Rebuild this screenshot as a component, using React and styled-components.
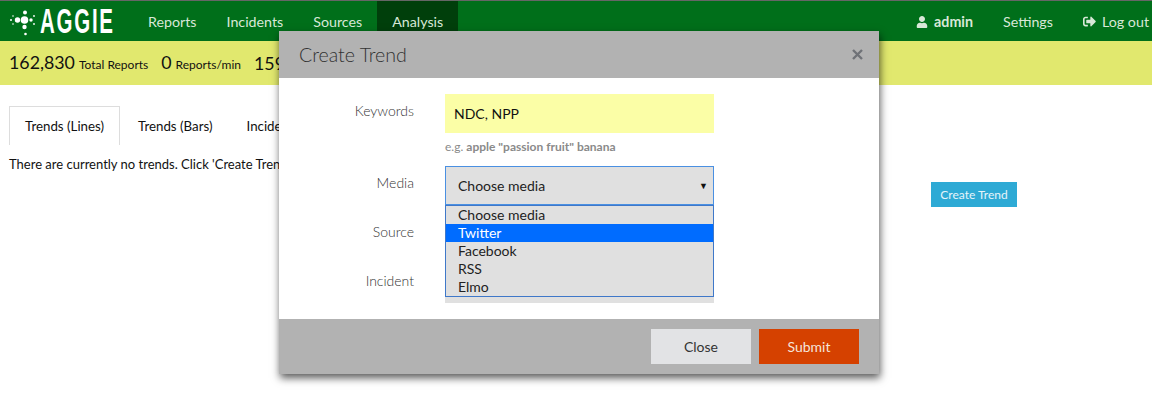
import React from "react"
import styled, { createGlobalStyle } from "styled-components"
import { FaUser, FaSignOutAlt } from "react-icons/fa"

const GlobalStyle = createGlobalStyle`
  html, body {
    margin: 0;
    padding: 0;
    background: #fff;
    color: #111;
    font-family: Lato, "Open Sans", sans-serif;
    font-size: 14px;
    line-height: 20px;
  }
`

const Page = styled.div`
  position: relative;
  width: 1152px;
  height: 409px;
  overflow: hidden;
`

const Navbar = styled.header`
  display: flex;
  align-items: stretch;
  height: 40px;
  background: #006f1a;
  border-top: 1px solid #666;
`

const Brand = styled.div`
  display: flex;
  flex-shrink: 0;
  align-items: center;
  width: 133px;
  padding-left: 8px;
  box-sizing: border-box;
`

const BrandName = styled.span`
  display: block;
  width: 74px;
  font-family: "Liberation Sans", sans-serif;
  font-weight: 700;
  font-size: 35px;
  line-height: 40px;
  letter-spacing: 3px;
  color: #fff;
  white-space: nowrap;
  transform: scaleX(0.585);
  transform-origin: left center;
`

const NavList = styled.nav`
  display: flex;
  flex: 1;
`

const NavItem = styled.a`
  display: flex;
  align-items: center;
  gap: 6px;
  padding: 1px 15px 0;
  font-size: 14.25px;
  color: #d8e8d8;
  font-weight: ${(props) => (props.$bold ? 700 : 400)};
  background: ${(props) => (props.$active ? "#003f0b" : "transparent")};
`

const NavRight = styled.nav`
  display: flex;
  margin-right: -12px;
`

const StatsBar = styled.div`
  display: flex;
  align-items: center;
  gap: 13px;
  height: 44px;
  padding: 0 9px;
  background: #e1e86e;
`

const Stat = styled.div`
  display: flex;
  align-items: baseline;
  gap: 4px;
  font-size: 12px;
  white-space: nowrap;
`

const StatValue = styled.span`
  font-size: 17.8px;
`

const Content = styled.div`
  display: flex;
`

const Main = styled.main`
  flex: 1;
  min-width: 0;
  padding: 21px 0 0 9px;
`

const Tabs = styled.ul`
  display: flex;
  gap: 2px;
  list-style: none;
  margin: 0 0 9px;
  padding: 0;
`

const Tab = styled.li`
  height: 20px;
  padding: 9px 15px;
  border: 1px solid ${(props) => (props.$active ? "#ddd" : "transparent")};
  border-bottom: 0;
  font-size: 13.3px;
  white-space: nowrap;
`

const Message = styled.p`
  margin: 0;
  font-size: 13px;
  white-space: nowrap;
`

const Aside = styled.aside`
  flex-shrink: 0;
  width: 221px;
  padding-top: 97px;
`

const CreateButton = styled.button`
  width: 86px;
  height: 25px;
  padding: 0;
  border: 0;
  background: #2eaad5;
  color: #e6f4fa;
  font: 400 12px Lato, sans-serif;
`

const Modal = styled.section`
  position: absolute;
  top: 31px;
  left: 279px;
  width: 600px;
  background: #fff;
  box-shadow: 1px 4px 8px rgba(0, 0, 0, 0.65);
`

const ModalHeader = styled.div`
  display: flex;
  align-items: center;
  justify-content: space-between;
  height: 47px;
  padding: 0 16px 0 20px;
  background: #b2b2b2;
`

const ModalTitle = styled.h4`
  margin: 0;
  font-size: 19.6px;
  font-weight: 300;
  color: #333;
`

const CloseIcon = styled.svg`
  width: 11px;
  height: 11px;
  stroke: #6f7277;
  stroke-width: 2.4;
`

const ModalBody = styled.div`
  display: grid;
  grid-template-columns: 135px 269px;
  column-gap: 31px;
  row-gap: 10px;
  padding: 16px 0;
`

const Label = styled.label`
  padding-top: 7px;
  text-align: right;
  font-weight: 300;
  color: #333;
`

const Field = styled.div`
  position: relative;
`

const KeywordInput = styled.div`
  box-sizing: border-box;
  height: 39px;
  padding: 10px 9px 9px;
  background: #fbfea6;
  color: #111;
`

const Hint = styled.div`
  margin-top: 4px;
  height: 19px;
  font-size: 12px;
  color: #8a8a8a;

  b {
    font-weight: 700;
  }
`

const Select = styled.div`
  display: flex;
  align-items: center;
  justify-content: space-between;
  box-sizing: border-box;
  height: 39px;
  padding: 0 5px 0 12px;
  background: #e0e0e0;
  border: 1px solid ${(props) => (props.$open ? "#4a90e2" : "#e0e0e0")};
  color: #222;
`

const Caret = styled.span`
  font-size: 9px;
  color: #111;
`

const Dropdown = styled.ul`
  position: absolute;
  top: 100%;
  left: 0;
  right: 0;
  z-index: 2;
  margin: 0;
  padding: 0;
  box-sizing: border-box;
  height: 92px;
  list-style: none;
  background: #e0e0e0;
  border: 1px solid #3f78c9;
`

const Option = styled.li`
  height: 18px;
  line-height: 18px;
  padding-left: 12px;
  color: ${(props) => (props.$selected ? "#fff" : "#222")};
  background: ${(props) => (props.$selected ? "#006cff" : "transparent")};
`

const ModalFooter = styled.div`
  display: flex;
  justify-content: flex-end;
  gap: 8px;
  padding: 10px 20px 10px 0;
  background: #b2b2b2;
`

const FooterButton = styled.button`
  width: 100px;
  height: 35px;
  padding: 0;
  border: 0;
  font: 400 14px Lato, sans-serif;
  color: ${(props) => (props.$primary ? "#f4e5dc" : "#333")};
  background: ${(props) => (props.$primary ? "#d54100" : "#e2e3e5")};
`

const LogoSvg = styled.svg`
  flex-shrink: 0;
`

// viewBox follows page coordinates of the mark
const LogoMark = () => (
  <LogoSvg width="32" height="30" viewBox="8 6 32 30" fill="#fff">
    <circle cx="24.5" cy="20" r="3.8" />
    <circle cx="17.5" cy="20" r="2.7" />
    <circle cx="25" cy="12.5" r="2" />
    <circle cx="24.5" cy="27" r="2.2" />
    <circle cx="31" cy="20" r="1.7" />
    <circle cx="25.5" cy="34" r="1.3" />
    <circle cx="11" cy="20" r="1" />
    <circle cx="34" cy="16" r="0.9" />
    <circle cx="34" cy="24" r="0.9" />
    <circle cx="13" cy="24" r="0.8" />
    <circle cx="13" cy="16" r="0.8" />
  </LogoSvg>
)

const mediaOptions = ["Choose media", "Twitter", "Facebook", "RSS", "Elmo"]

const App = () => (
  <Page>
    <GlobalStyle />
    <Navbar>
      <Brand>
        <LogoMark />
        <BrandName>AGGIE</BrandName>
      </Brand>
      <NavList>
        <NavItem>Reports</NavItem>
        <NavItem>Incidents</NavItem>
        <NavItem>Sources</NavItem>
        <NavItem $active>Analysis</NavItem>
      </NavList>
      <NavRight>
        <NavItem $bold>
          <FaUser size={12} />
          admin
        </NavItem>
        <NavItem>Settings</NavItem>
        <NavItem>
          <FaSignOutAlt size={13} />
          Log out
        </NavItem>
      </NavRight>
    </Navbar>
    <StatsBar>
      <Stat>
        <StatValue>162,830</StatValue> Total Reports
      </Stat>
      <Stat>
        <StatValue>0</StatValue> Reports/min
      </Stat>
      <Stat>
        <StatValue>159</StatValue>
      </Stat>
    </StatsBar>
    <Content>
      <Main>
        <Tabs>
          <Tab $active>Trends (Lines)</Tab>
          <Tab>Trends (Bars)</Tab>
          <Tab>Incidents</Tab>
        </Tabs>
        <Message>There are currently no trends. Click 'Create Trend' to get started.</Message>
      </Main>
      <Aside>
        <CreateButton>Create Trend</CreateButton>
      </Aside>
    </Content>
    <Modal>
      <ModalHeader>
        <ModalTitle>Create Trend</ModalTitle>
        <CloseIcon viewBox="0 0 11 11">
          <path d="M1 1l9 9M10 1l-9 9" />
        </CloseIcon>
      </ModalHeader>
      <ModalBody>
        <Label>Keywords</Label>
        <Field>
          <KeywordInput>NDC, NPP</KeywordInput>
          <Hint>
            e.g. <b>apple "passion fruit" banana</b>
          </Hint>
        </Field>
        <Label>Media</Label>
        <Field>
          <Select $open>
            Choose media
            <Caret>▼</Caret>
          </Select>
          <Dropdown>
            {mediaOptions.map((option) => (
              <Option key={option} $selected={option === "Twitter"}>
                {option}
              </Option>
            ))}
          </Dropdown>
        </Field>
        <Label>Source</Label>
        <Field>
          <Select />
        </Field>
        <Label>Incident</Label>
        <Field>
          <Select />
        </Field>
      </ModalBody>
      <ModalFooter>
        <FooterButton>Close</FooterButton>
        <FooterButton $primary>Submit</FooterButton>
      </ModalFooter>
    </Modal>
  </Page>
)

export default App
